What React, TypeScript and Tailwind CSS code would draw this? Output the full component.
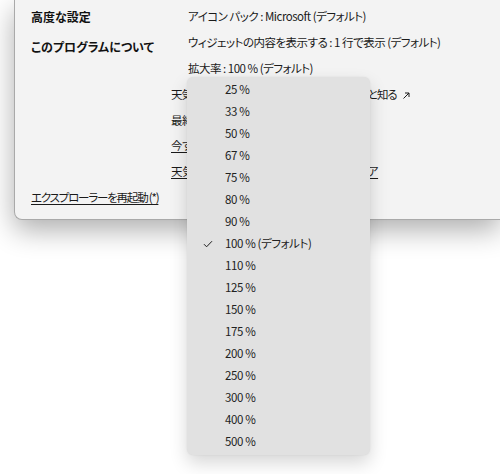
import React from 'react';

const ZOOM_LEVELS = ['25', '33', '50', '67', '75', '80', '90', '100', '110', '125', '150', '175', '200', '250', '300', '400', '500'];

const font = "[font-family:'Noto_Sans_CJK_JP','Noto_Sans',sans-serif] [font-feature-settings:'palt']";

function Check() {
  return (
    <svg width="10" height="8" viewBox="0 0 10 8" className="text-[#1b1b1b]">
      <path d="M1 4.2 L3.6 6.8 L9 1.2" fill="none" stroke="currentColor" strokeWidth="1" />
    </svg>
  );
}

function ExternalArrow() {
  return (
    <svg width="9" height="9" viewBox="0 0 9 9" className="ml-[5px] inline-block">
      <path d="M1.5 7.5 L7 2 M3 2 H7 V6" fill="none" stroke="#1a1a1a" strokeWidth="1" />
    </svg>
  );
}

function ZoomMenu() {
  return (
    <div className="absolute left-[187px] top-[77px] w-[183px] rounded-[6px] bg-[#e1e1e1] py-[2px] shadow-[0_8px_18px_rgba(0,0,0,0.16),0_0_2px_rgba(0,0,0,0.08)]">
      {ZOOM_LEVELS.map((z) => (
        <div key={z} className="flex h-[22px] items-center text-[11.5px] tracking-[-0.4px] text-[#222]">
          <span className="flex w-[38px] justify-center pl-[3px]">{z === '100' && <Check />}</span>
          <span>{z} %{z === '100' && ' (デフォルト)'}</span>
        </div>
      ))}
    </div>
  );
}

export default function App() {
  return (
    <div className={`relative h-[474px] w-[500px] overflow-hidden bg-white ${font}`}>
      <div className="ml-[14px] h-[220px] rounded-bl-[8px] border-b border-l border-[#a9a9a9] bg-[#f3f3f3] pt-[4px] text-[11.5px] tracking-[-0.5px] text-[#1a1a1a] shadow-[0_10px_28px_rgba(0,0,0,0.32)]">
        <div className="flex">
          <div className="w-[173px] pl-[16px] text-[12px] font-bold tracking-normal text-[#111]">
            <div className="flex h-[26px] items-center">高度な設定</div>
            <div className="mt-[4px] flex h-[26px] items-center">このプログラムについて</div>
          </div>
          <div>
            <div className="flex h-[26px] items-center">アイコン パック : Microsoft (デフォルト)</div>
            <div className="flex h-[26px] items-center">ウィジェットの内容を表示する : 1 行で表示 (デフォルト)</div>
            <div className="flex h-[26px] items-center">拡大率 : 100 % (デフォルト)</div>
          </div>
        </div>
        <div className="pl-[156px]">
          <div className="flex h-[26px] items-center tracking-[-1.1px]">
            天気情報の提供元 (MSN) についてさらにもっと知る
            <ExternalArrow />
          </div>
          <div className="flex h-[25px] items-center">最終更新 : 2024/05/12</div>
          <div className="flex h-[26px] items-center">
            <span className="underline underline-offset-2">今すぐ更新を確認</span>
          </div>
          <div className="flex h-[26px] items-center">
            <span className="underline underline-offset-2 tracking-[-0.2px]">天気のキャッシュ済みデータをすべてクリア</span>
          </div>
        </div>
        <div className="flex h-[26px] items-center pl-[16px]">
          <span className="underline underline-offset-2 tracking-[-1.2px]">エクスプローラーを再起動 (*)</span>
        </div>
      </div>
      <ZoomMenu />
    </div>
  );
}
